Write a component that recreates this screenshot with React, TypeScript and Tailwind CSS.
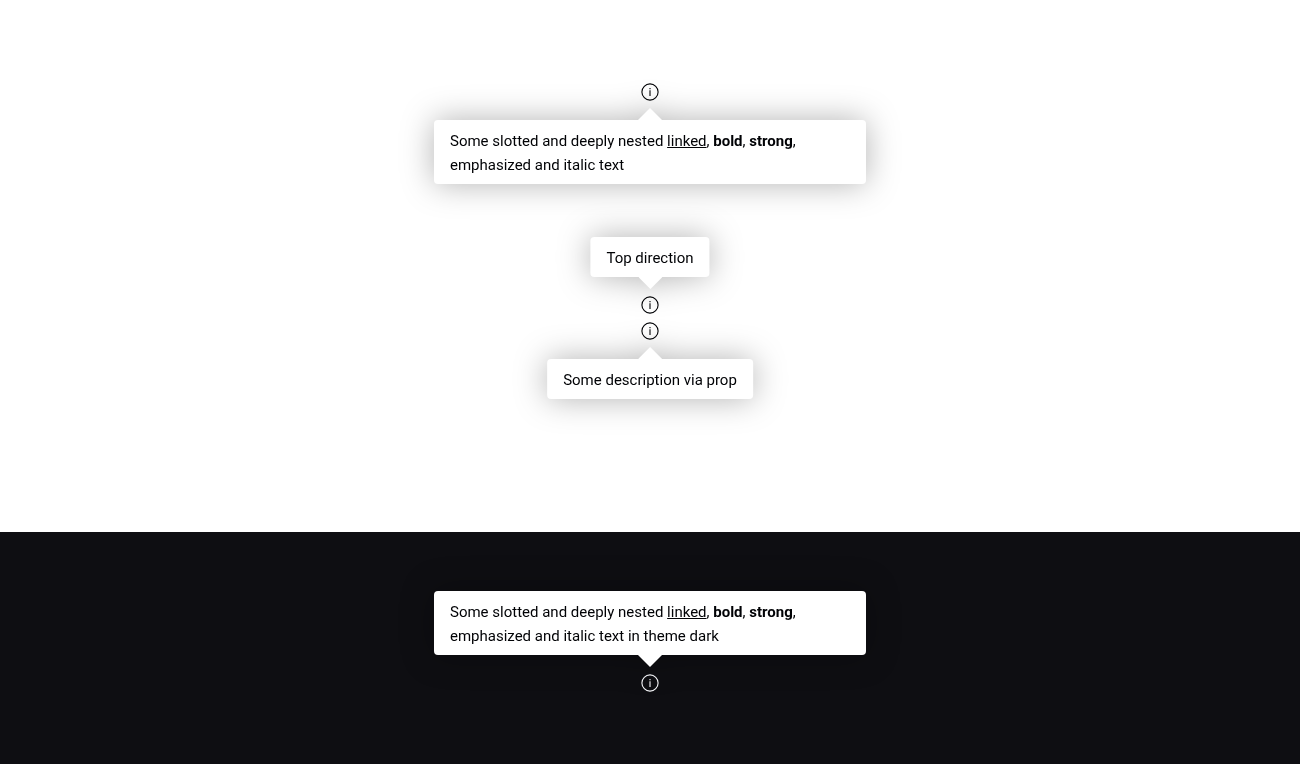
import type { ReactNode } from 'react';

type Direction = 'top' | 'bottom';
type Theme = 'light' | 'dark';

interface PopoverProps {
  direction: Direction;
  theme?: Theme;
  children: ReactNode;
}

function InfoIcon() {
  return (
    <svg viewBox="0 0 24 24" className="size-6" fill="none" aria-hidden="true">
      <circle cx="12" cy="12" r="8.1" stroke="currentColor" strokeWidth="1.1" />
      <path d="M11.45 10.2h1.1V16h-1.1zM11.45 8h1.1v1.2h-1.1z" fill="currentColor" />
    </svg>
  );
}

function Popover({ direction, theme = 'light', children }: PopoverProps) {
  const isTop = direction === 'top';
  return (
    <div className="relative size-6">
      <button
        type="button"
        aria-label="More information"
        aria-expanded="true"
        className={`block size-6 rounded-full ${theme === 'dark' ? 'text-[#fbfcff]' : 'text-[#010205]'}`}
      >
        <InfoIcon />
      </button>
      <div
        className={`absolute left-1/2 w-max max-w-[432px] -translate-x-1/2 drop-shadow-[0_0_16px_rgba(0,0,0,0.3)] ${
          isTop ? 'bottom-10' : 'top-10'
        }`}
      >
        <div className="rounded-sm bg-white px-4 pt-[9px] pb-[7px] text-[#010205]">{children}</div>
        <svg
          viewBox="0 0 24 12"
          className={`absolute left-1/2 h-3 w-6 -translate-x-1/2 text-white ${
            isTop ? 'top-full rotate-180' : 'bottom-full'
          }`}
          aria-hidden="true"
        >
          <path d="M0 12 12 0l12 12z" fill="currentColor" />
        </svg>
      </div>
    </div>
  );
}

function SlottedText({ ending }: { ending: string }) {
  return (
    <p>
      Some slotted and deeply nested{' '}
      <a href="#linked" className="underline">
        linked
      </a>
      , <b className="font-bold">bold</b>, <strong className="font-bold">strong</strong>, {ending}
    </p>
  );
}

export default function App() {
  return (
    <main className="flex min-h-screen flex-col font-['Roboto',sans-serif] text-[15px] leading-6">
      <section className="flex flex-col items-center bg-white pt-20 pb-[189px]">
        <Popover direction="bottom">
          <SlottedText ending="emphasized and italic text" />
        </Popover>
        <div className="mt-[189px] flex flex-col gap-0.5">
          <Popover direction="top">Top direction</Popover>
          <Popover direction="bottom">Some description via prop</Popover>
        </div>
      </section>
      <section className="flex grow flex-col items-center bg-[#0e0e12] pt-[139px] pb-16">
        <Popover direction="top" theme="dark">
          <SlottedText ending="emphasized and italic text in theme dark" />
        </Popover>
      </section>
    </main>
  );
}
